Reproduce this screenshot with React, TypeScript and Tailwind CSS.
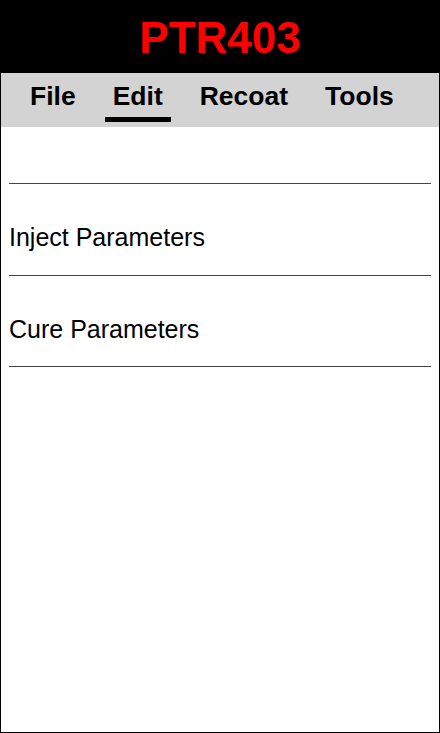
export default function App() {
  const font = { fontFamily: '"Liberation Sans", Arial, sans-serif' };
  const tabs = ["File", "Edit", "Recoat", "Tools"];
  return (
    <div className="w-[440px] h-[733px] border border-black bg-white flex flex-col" style={font}>
      <div className="h-[72px] bg-black flex justify-center pt-[12px]">
        <div className="text-[44px] leading-[50px] font-bold text-[#ff0000]">PTR403</div>
      </div>
      <div className="h-[54px] bg-[#d3d3d3] flex items-start pt-[8px] pl-[29px] gap-[37px]">
        {tabs.map((t) => (
          <div key={t} className="relative text-[26.5px] leading-[30px] font-bold text-black">
            {t}
            {t === "Edit" && (
              <div className="absolute -left-[8px] -right-[8px] top-[36px] h-[5px] bg-black" />
            )}
          </div>
        ))}
      </div>
      <div className="mx-2">
        <div className="h-[57px] border-b border-[#444]" />
        <div className="h-[92px] border-b border-[#444] pt-[39px] text-[25px] leading-[28px] text-black">
          Inject Parameters
        </div>
        <div className="h-[91px] border-b border-[#444] pt-[39px] text-[25px] leading-[28px] text-black">
          Cure Parameters
        </div>
      </div>
    </div>
  );
}
